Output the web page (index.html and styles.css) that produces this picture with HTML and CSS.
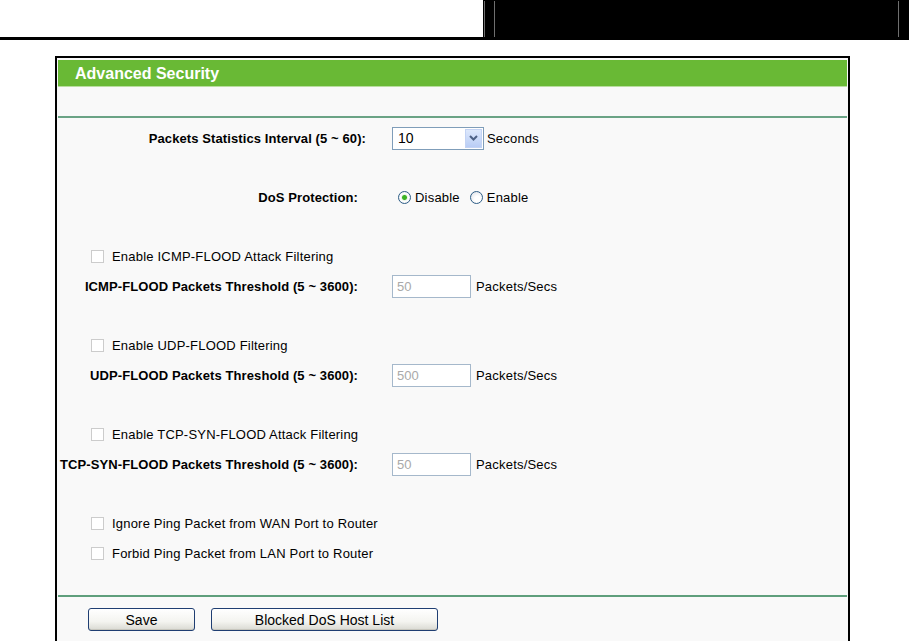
FILE: index.html
```html
<!DOCTYPE html>
<html lang="en">
<head>
  <meta charset="UTF-8" />
  <title>Advanced Security</title>
  <link rel="stylesheet" href="styles.css">
</head>
<body>
  <div class="top-bar">
    <div class="top-left"></div>
    <div class="top-right"></div>
  </div>

  <div class="panel">
    <div class="panel-title">Advanced Security</div>
    <div class="panel-gap"></div>

    <form class="panel-body">
      <div class="row">
        <label class="label label-wide">Packets Statistics Interval (5 ~ 60):</label>
        <div class="value">
          <div class="select">
            <span>10</span>
            <span class="select-btn">
              <svg width="9" height="6" viewBox="0 0 9 6"><path d="M1 1 L4.5 4.5 L8 1" fill="none" stroke="#4d6185" stroke-width="2"/></svg>
            </span>
          </div>
          <span class="unit unit-sec">Seconds</span>
        </div>
      </div>

      <div class="row">
        <label class="label">DoS Protection:</label>
        <div class="value">
          <input type="radio" name="dos" class="radio" checked> <span class="opt">Disable</span>
          <input type="radio" name="dos" class="radio"> <span class="opt">Enable</span>
        </div>
      </div>

      <div class="group">
        <div class="row check-row">
          <input type="checkbox" class="check"> <span>Enable ICMP-FLOOD Attack Filtering</span>
        </div>
        <div class="row">
          <label class="label">ICMP-FLOOD Packets Threshold (5 ~ 3600):</label>
          <div class="value">
            <input type="text" class="num" value="50" disabled>
            <span class="unit">Packets/Secs</span>
          </div>
        </div>
      </div>

      <div class="group">
        <div class="row check-row">
          <input type="checkbox" class="check"> <span>Enable UDP-FLOOD Filtering</span>
        </div>
        <div class="row">
          <label class="label">UDP-FLOOD Packets Threshold (5 ~ 3600):</label>
          <div class="value">
            <input type="text" class="num" value="500" disabled>
            <span class="unit">Packets/Secs</span>
          </div>
        </div>
      </div>

      <div class="group">
        <div class="row check-row">
          <input type="checkbox" class="check"> <span>Enable TCP-SYN-FLOOD Attack Filtering</span>
        </div>
        <div class="row">
          <label class="label">TCP-SYN-FLOOD Packets Threshold (5 ~ 3600):</label>
          <div class="value">
            <input type="text" class="num" value="50" disabled>
            <span class="unit">Packets/Secs</span>
          </div>
        </div>
      </div>

      <div class="group">
        <div class="row check-row">
          <input type="checkbox" class="check"> <span>Ignore Ping Packet from WAN Port to Router</span>
        </div>
        <div class="row check-row">
          <input type="checkbox" class="check"> <span>Forbid Ping Packet from LAN Port to Router</span>
        </div>
      </div>
    </form>

    <div class="panel-foot">
      <button class="btn btn-save">Save</button>
      <button class="btn btn-list">Blocked DoS Host List</button>
    </div>
  </div>
</body>
</html>
```

FILE: styles.css
```css
* {
  margin: 0;
  padding: 0;
  box-sizing: border-box;
}
html, body {
  background: #fff;
  font-family: "Liberation Sans", Arial, sans-serif;
  font-size: 13px;
  letter-spacing: 0.2px;
  color: #000;
  overflow: hidden;
}

/* top banner */
.top-bar {
  display: flex;
  height: 40px;
}
.top-left {
  width: 483px;
  border-bottom: 3px solid #000;
}
.top-right {
  width: 426px;
  background: #000;
  border-left: 1px solid #000;
  position: relative;
}
.top-right::before,
.top-right::after {
  content: "";
  position: absolute;
  top: 1px;
  height: 36px;
  width: 1px;
  background: #6f6f6f;
}
.top-right::before { left: 0; }
.top-right::after { left: 10px; box-shadow: 404px 0 0 #6f6f6f; }

/* panel */
.panel {
  margin: 16px 0 0 55px;
  width: 795px;
  height: 590px;
  border: 2px solid #000;
  border-bottom: none;
  padding: 2px 1px 0;
  background: #f9f9f9;
}
.panel-title {
  height: 27px;
  background: #69b935;
  border-bottom: 1px solid #b9de9f;
  color: #fff;
  font-size: 16px;
  font-weight: bold;
  letter-spacing: 0;
  padding-left: 17px;
  line-height: 27px;
}
.panel-gap {
  height: 31px;
  border-bottom: 2px solid #6aa385;
}
.panel-body {
  display: flex;
  flex-direction: column;
  gap: 29px;
  padding-top: 5px;
  height: 479px;
  border-bottom: 2px solid #5f9f7c;
}

.row {
  display: flex;
  align-items: center;
  height: 30px;
}
.label {
  width: 300px;
  flex-shrink: 0;
  display: flex;
  justify-content: flex-end;
  white-space: nowrap;
  font-size: 13px;
  font-weight: bold;
  letter-spacing: 0.1px;
}
.label-wide {
  width: 308px;
  margin-right: -8px;
}
.value {
  display: flex;
  align-items: center;
  margin-left: 34px;
}
.unit {
  margin-left: 5px;
}
.unit-sec {
  margin-left: 3px;
}

.check-row {
  padding-left: 33px;
}
.check {
  appearance: none;
  width: 13px;
  height: 13px;
  border: 1px solid #cccccc;
  background: #fff;
  margin-right: 8px;
}

.radio {
  appearance: none;
  width: 13px;
  height: 13px;
  border-radius: 50%;
  border: 1px solid #2d5d86;
  background: radial-gradient(circle at 60% 65%, #ffffff 30%, #d9dde4 100%);
  margin: 0 4px 0 6px;
}
.radio:checked {
  background: radial-gradient(circle, #3bb324 0, #3bb324 2px, #e9f5e6 3px, #ffffff 4px, #dde1e7 100%);
}
.opt + .radio {
  margin-left: 10px;
}

.select {
  width: 92px;
  height: 23px;
  border: 1px solid #7f9db9;
  background: #fff;
  display: flex;
  align-items: center;
  justify-content: space-between;
  padding: 1px 1px 1px 5px;
  font-size: 14px;
  letter-spacing: 0;
}
.select-btn {
  width: 17px;
  height: 19px;
  background: linear-gradient(#dde8fc, #b9cdf5);
  border: 1px solid #c3d3f4;
  display: flex;
  align-items: center;
  justify-content: center;
}

.num {
  width: 79px;
  height: 23px;
  border: 1px solid #a5b8cb;
  background: #fff;
  color: #a9a9a9;
  font-family: inherit;
  font-size: 13px;
  padding-left: 4px;
}

/* buttons */
.panel-foot {
  display: flex;
  gap: 16px;
  padding: 11px 0 0 30px;
}
.btn {
  height: 23px;
  border: 1px solid #1f3e72;
  border-radius: 3px;
  background: linear-gradient(#ffffff 0%, #f4f4f0 60%, #d9d9d2 100%);
  font-family: inherit;
  font-size: 14px;
  color: #000;
  box-shadow: inset 0 -1px 0 #c7c6bd;
}
.btn-save {
  width: 107px;
}
.btn-list {
  width: 227px;
}
```
